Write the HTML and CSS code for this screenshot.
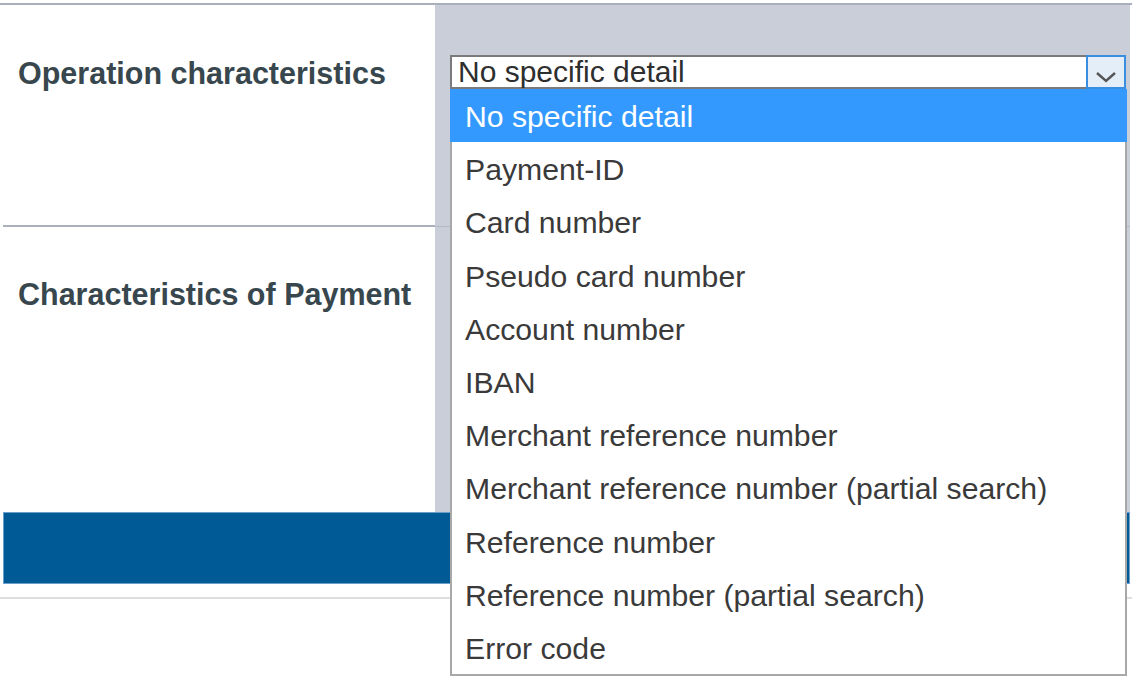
FILE: index.html
```html
<!DOCTYPE html>
<html>
<head>
<meta charset="utf-8">
<link rel="stylesheet" href="styles.css">
</head>
<body>
<div class="page">
  <div class="topline"></div>
  <div class="form">
    <div class="label-cell first"><span class="label">Operation characteristics</span></div>
    <div class="value-cell first">
      <div class="select">
        <span class="select-text">No specific detail</span>
        <span class="select-btn">
          <svg width="24" height="14" viewBox="0 0 24 14"><path d="M3 3 L12 11 L21 3" fill="none" stroke="#555" stroke-width="2.4"/></svg>
        </span>
      </div>
    </div>
    <div class="label-cell second"><span class="label">Characteristics of Payment</span></div>
    <div class="value-cell second"></div>
  </div>
  <div class="bluebar"></div>
  <div class="bottomline"></div>

  <ul class="dropdown">
    <li class="selected">No specific detail</li>
    <li>Payment-ID</li>
    <li>Card number</li>
    <li>Pseudo card number</li>
    <li>Account number</li>
    <li>IBAN</li>
    <li>Merchant reference number</li>
    <li>Merchant reference number (partial search)</li>
    <li>Reference number</li>
    <li>Reference number (partial search)</li>
    <li>Error code</li>
  </ul>
</div>
</body>
</html>
```
FILE: styles.css
```css
html, body {
  margin: 0;
  padding: 0;
  background: #ffffff;
  font-family: "Liberation Sans", Arial, sans-serif;
}
.page {
  position: relative;
  width: 1132px;
  height: 680px;
  overflow: hidden;
}
.topline {
  margin-top: 3px;
  height: 2px;
  background: #a9afbb;
}
.form {
  display: grid;
  grid-template-columns: 435px 1fr;
  grid-template-rows: 222px 285px;
}
.label-cell {
  padding-left: 18px;
}
.label-cell.first {
  padding-top: 53px;
  border-bottom: 2px solid #aab0bc;
  margin-left: 3px;
  padding-left: 15px;
  box-sizing: border-box;
}
.label-cell.second {
  padding-top: 52px;
}
.label {
  display: block;
  font-weight: bold;
  font-size: 30.5px;
  line-height: 30px;
  color: #38474e;
  white-space: nowrap;
}
.value-cell {
  background: #c9ced8;
  margin-right: 2px;
}
.value-cell.first {
  padding: 50px 4px 0 15px;
  box-sizing: border-box;
  border-bottom: 1px solid #b3b8c3;
}
.select {
  display: flex;
  align-items: center;
  height: 34px;
  box-sizing: border-box;
  border: 2px solid #7a7a7a;
  border-right: none;
  background: #fff;
}
.select-text {
  flex: 1;
  padding-left: 6px;
  font-size: 30px;
  line-height: 34px;
  color: #2e2e2e;
  white-space: nowrap;
}
.select-btn {
  align-self: stretch;
  width: 40px;
  margin-top: -2px;
  margin-bottom: -2px;
  box-sizing: border-box;
  border: 2px solid #3a8ee0;
  background: #e3eef9;
  display: flex;
  align-items: flex-end;
  justify-content: center;
  padding-bottom: 3px;
}
.bluebar {
  margin-left: 3px;
  margin-right: 2px;
  height: 72px;
  box-sizing: border-box;
  background: #005a96;
  border: 1px solid #6d9fcb;
}
.bottomline {
  margin-top: 13px;
  height: 2px;
  background: #dedede;
}
.dropdown {
  position: absolute;
  left: 450px;
  top: 89px;
  width: 677px;
  margin: 0;
  padding: 0;
  list-style: none;
  background: #fff;
  border: 2px solid #a8a8a8;
  border-top: none;
  box-sizing: border-box;
}
.dropdown li {
  height: 53.2px;
  line-height: 55px;
  padding-left: 13px;
  font-size: 30.2px;
  color: #3a3a3a;
  white-space: nowrap;
}
.dropdown li.selected {
  background: #3399ff;
  color: #ffffff;
  margin: 0 -2px;
  padding-left: 15px;
}
```
